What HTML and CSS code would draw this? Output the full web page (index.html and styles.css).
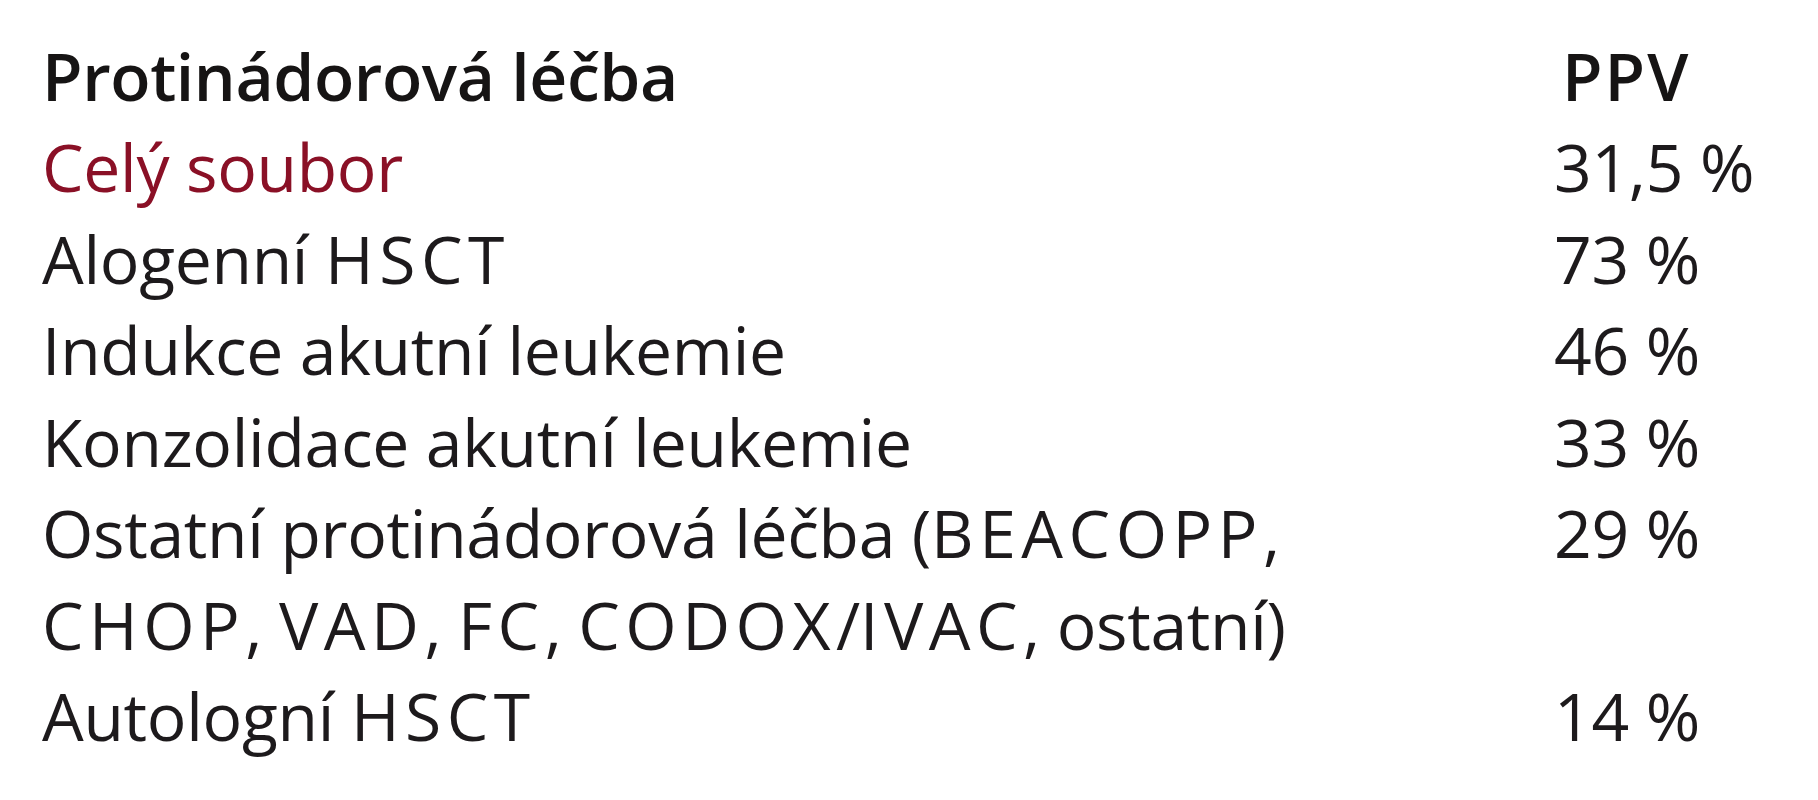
FILE: index.html
```html
<!DOCTYPE html>
<html lang="cs">
<head>
<meta charset="utf-8">
<title>Protinádorová léčba – PPV</title>
<link rel="stylesheet" href="styles.css">
</head>
<body>
<div class="page">
  <div class="table">
    <div class="cell head">Protinádorová léčba</div>
    <div class="cell head val"><abbr class="ab">PPV</abbr></div>
    <div class="cell accent">Celý soubor</div>
    <div class="cell val">31,5 %</div>
    <div class="cell">Alogenní <abbr class="ab">HSCT</abbr></div>
    <div class="cell val">73 %</div>
    <div class="cell">Indukce akutní leukemie</div>
    <div class="cell val">46 %</div>
    <div class="cell">Konzolidace akutní leukemie</div>
    <div class="cell val">33 %</div>
    <div class="cell">Ostatní protinádorová léčba (<abbr class="ab">BEACOPP</abbr>,<br><abbr class="ab">CHOP</abbr>, <abbr class="ab">VAD</abbr>, <abbr class="ab">FC</abbr>, <abbr class="ab">CODOX</abbr>/<abbr class="ab">IVAC</abbr>, ostatní)</div>
    <div class="cell val">29 %</div>
    <div class="cell">Autologní <abbr class="ab">HSCT</abbr></div>
    <div class="cell val">14 %</div>
  </div>
</div>
</body>
</html>
```
FILE: styles.css
```css
html, body {
  margin: 0;
  padding: 0;
  background: #ffffff;
}

.page {
  width: 1818px;
  height: 800px;
  overflow: hidden;
}

.table {
  display: grid;
  grid-template-columns: 1512px auto;
  padding: 29.5px 0 0 42px;
  font-family: "Open Sans", "DejaVu Sans", sans-serif;
  font-size: 66px;
  line-height: 91.5px;
  letter-spacing: -0.3px;
  color: #1d1a1c;
}

.cell {
  white-space: nowrap;
}

.ab {
  text-decoration: none;
  letter-spacing: 5.5px;
}

.head {
  font-weight: 600;
  letter-spacing: -0.4px;
  color: #161414;
}

.head .ab {
  letter-spacing: 2px;
}

.head.val {
  padding-left: 8px;
}

.accent {
  color: #8a1026;
}
```
